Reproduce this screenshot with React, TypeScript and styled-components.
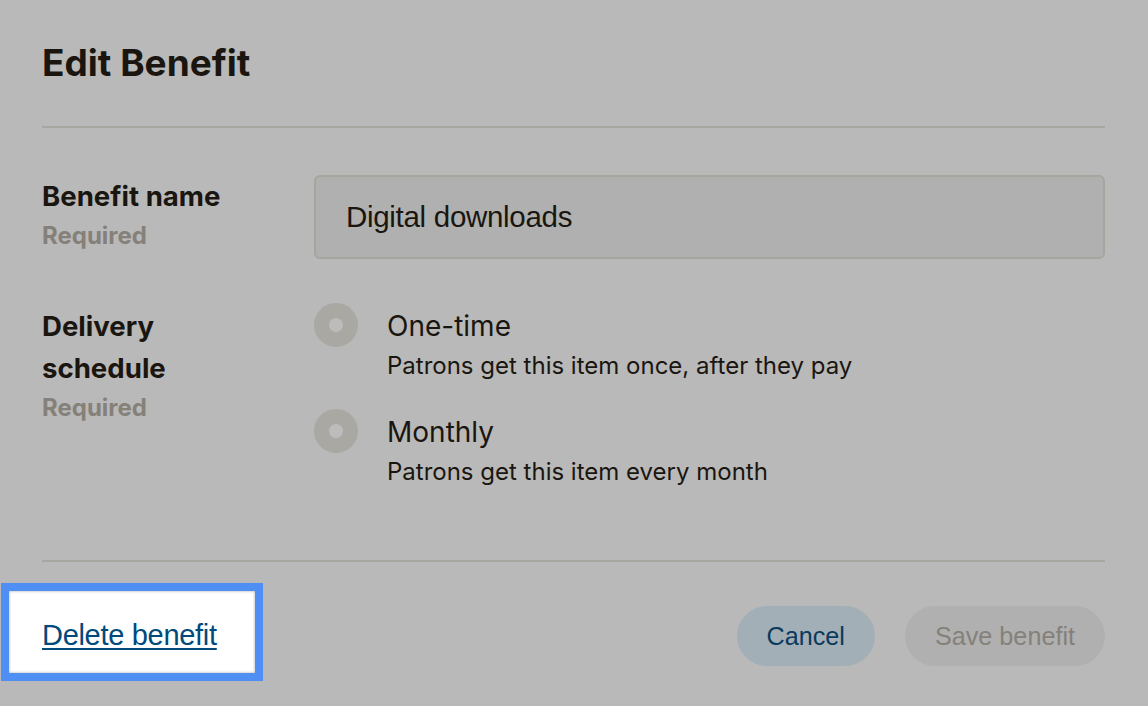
import * as React from "react";
import styled, { createGlobalStyle } from "styled-components";

const Colors = {
    page: "#b9b9b9",
    ink: "#1a160f",
    muted: "#858179",
    rule: "#a7a69f",
    field: "#b0b0b0",
    fieldBorder: "#a6a59e",
    radio: "#a9a8a2",
    link: "#004a7c",
    cancelBg: "#a3afb6",
    cancelText: "#0b3a5c",
    focus: "#4f8ff3",
};

const GlobalStyle = createGlobalStyle`
    html, body {
        margin: 0;
        padding: 0;
        background: ${Colors.page};
    }
    body {
        font-family: Inter, "Noto Sans", sans-serif;
        color: ${Colors.ink};
    }
`;

const Page = styled.div`
    width: 1148px;
    height: 706px;
    box-sizing: border-box;
    padding: 0 43px 0 42px;
    display: flex;
    flex-direction: column;
    overflow: hidden;
`;

const Title = styled.h1`
    margin: 0;
    height: 128px;
    box-sizing: border-box;
    padding-top: 41px;
    font-size: 37px;
    font-weight: 700;
    line-height: 44px;
    border-bottom: 2px solid ${Colors.rule};
`;

const Form = styled.div`
    display: flex;
    flex-direction: column;
    gap: 46px;
    padding-top: 47px;
    height: 434px;
    box-sizing: border-box;
    border-bottom: 2px solid ${Colors.rule};
`;

const FieldRow = styled.div`
    display: grid;
    grid-template-columns: 272px 1fr;
    align-items: start;
`;

const LabelBlock = styled.div`
    display: flex;
    flex-direction: column;
`;

const Label = styled.div`
    font-size: 27.6px;
    font-weight: 700;
    line-height: 42px;
    max-width: 220px;
`;

const Required = styled.div`
    font-size: 24px;
    font-weight: 700;
    line-height: 38px;
    color: ${Colors.muted};
`;

const TextInput = styled.div`
    height: 84px;
    box-sizing: border-box;
    border: 2px solid ${Colors.fieldBorder};
    border-radius: 6px;
    background: ${Colors.field};
    padding: 0 30px;
    display: flex;
    align-items: center;
    font-family: "Liberation Sans", Arial, sans-serif;
    font-size: 29.5px;
    letter-spacing: -0.3px;
`;

const Options = styled.div`
    display: flex;
    flex-direction: column;
    gap: 25px;
    margin-top: -2px;
`;

const Option = styled.div`
    display: grid;
    grid-template-columns: 44px 1fr;
    column-gap: 29px;
`;

const Radio = styled.span`
    width: 44px;
    height: 44px;
    box-sizing: border-box;
    border-radius: 50%;
    border: 15px solid ${Colors.radio};
    background: #bcbcbc;
`;

const OptionTitle = styled.div`
    font-size: 28px;
    line-height: 44px;
    padding-top: 1px;
`;

const OptionHint = styled.div`
    grid-column: 2;
    font-size: 24px;
    line-height: 36px;
`;

const Footer = styled.div`
    display: flex;
    align-items: flex-start;
    justify-content: space-between;
    padding-top: 21px;
`;

const FocusBox = styled.div`
    margin-left: -41px;
    width: 262px;
    height: 98px;
    box-sizing: border-box;
    border: 8px solid ${Colors.focus};
    background: #ffffff;
    box-shadow: inset 0 0 3px rgba(0, 0, 0, 0.35);
    display: flex;
    align-items: center;
    padding: 6px 0 0 33px;
`;

const DeleteLink = styled.a`
    font-family: "Liberation Sans", Arial, sans-serif;
    font-size: 29px;
    color: ${Colors.link};
    text-decoration: underline;
    text-decoration-thickness: 2px;
    text-underline-offset: 3px;
    letter-spacing: -0.3px;
    cursor: pointer;
`;

const Actions = styled.div`
    display: flex;
    gap: 30px;
    padding-top: 23px;
`;

const PillButton = styled.button<{ $primary?: boolean }>`
    height: 60px;
    border: none;
    border-radius: 30px;
    padding: 0 30px;
    font-family: "Liberation Sans", Arial, sans-serif;
    font-size: 25.2px;
    background: ${(p) => (p.$primary ? Colors.cancelBg : Colors.field)};
    color: ${(p) => (p.$primary ? Colors.cancelText : Colors.muted)};
`;

const options = [
    { title: "One-time", hint: "Patrons get this item once, after they pay" },
    { title: "Monthly", hint: "Patrons get this item every month" },
];

export default function App() {
    return (
        <>
            <GlobalStyle />
            <Page>
                <Title>Edit Benefit</Title>
                <Form>
                    <FieldRow>
                        <LabelBlock>
                            <Label>Benefit name</Label>
                            <Required>Required</Required>
                        </LabelBlock>
                        <TextInput>Digital downloads</TextInput>
                    </FieldRow>
                    <FieldRow>
                        <LabelBlock>
                            <Label>Delivery schedule</Label>
                            <Required>Required</Required>
                        </LabelBlock>
                        <Options>
                            {options.map((o) => (
                                <Option key={o.title}>
                                    <Radio />
                                    <OptionTitle>{o.title}</OptionTitle>
                                    <OptionHint>{o.hint}</OptionHint>
                                </Option>
                            ))}
                        </Options>
                    </FieldRow>
                </Form>
                <Footer>
                    <FocusBox>
                        <DeleteLink>Delete benefit</DeleteLink>
                    </FocusBox>
                    <Actions>
                        <PillButton $primary>Cancel</PillButton>
                        <PillButton>Save benefit</PillButton>
                    </Actions>
                </Footer>
            </Page>
        </>
    );
}
